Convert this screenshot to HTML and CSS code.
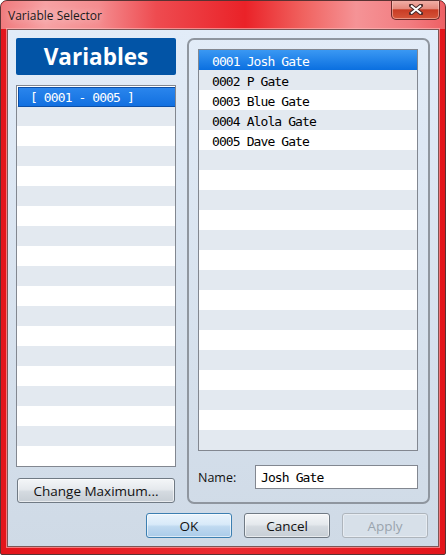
FILE: index.html
```html
<!DOCTYPE html>
<html lang="en">
<head>
  <meta charset="UTF-8" />
  <title>Variable Selector</title>
  <link rel="stylesheet" href="styles.css">
</head>
<body>
  <div class="window">
    <div class="titlebar">
      <span class="title">Variable Selector</span>
      <div class="close">
        <svg width="14" height="11" viewBox="0 0 14 11">
          <path d="M2 1.5 L12 9.5 M12 1.5 L2 9.5" stroke="#4a2a2a" stroke-width="4" stroke-linecap="square"/>
          <path d="M2 1.5 L12 9.5 M12 1.5 L2 9.5" stroke="#ffffff" stroke-width="2"/>
        </svg>
      </div>
    </div>
    <div class="client">
      <div class="main">
        <div class="left">
          <div class="header">Variables</div>
          <div class="list range-list">
            <div class="row selected">[ 0001 - 0005 ]</div>
          </div>
          <button class="btn btn-max">Change Maximum...</button>
        </div>
        <div class="group">
          <div class="list var-list">
            <div class="row selected">0001 Josh Gate</div>
            <div class="row">0002 P Gate</div>
            <div class="row">0003 Blue Gate</div>
            <div class="row">0004 Alola Gate</div>
            <div class="row">0005 Dave Gate</div>
          </div>
          <div class="name-row">
            <label for="name">Name:</label>
            <input type="text" id="name" value="Josh Gate" />
          </div>
        </div>
      </div>
      <div class="actions">
        <button class="btn btn-ok">OK</button>
        <button class="btn">Cancel</button>
        <button class="btn" disabled>Apply</button>
      </div>
    </div>
  </div>
</body>
</html>
```

FILE: styles.css
```css
body {
  margin: 0;
  background: #fff;
  font-family: "Open Sans", "Noto Sans", sans-serif;
}
.window {
  width: 446px;
  height: 555px;
  box-sizing: border-box;
  border: 1px solid #5a3232;
  border-radius: 7px 7px 2px 2px;
  background: linear-gradient(90deg, #e3151b, #ea2a30 50%, #e3151b);
  display: flex;
  flex-direction: column;
  overflow: hidden;
}
.titlebar {
  height: 28px;
  display: flex;
  align-items: center;
  padding-left: 7px;
  background: linear-gradient(90deg, #f07a7d 0%, #f6a2a4 10%, #f48c8f 22%, #ee4b50 35%, #ea2228 55%, #f0625f 68%, #f59396 80%, #f27c80 92%, #ee6064 100%);
}
.title {
  font-size: 12px;
  color: #1a1a1a;
  text-shadow: 0 0 8px rgba(255, 255, 255, 0.7);
}
.close {
  margin-left: auto;
  margin-right: 5px;
  align-self: flex-start;
  margin-top: -1px;
  width: 47px;
  height: 19px;
  border: 1px solid #6a2a2a;
  border-top: none;
  border-radius: 0 0 5px 5px;
  background: linear-gradient(#f2b2aa, #e58a7e 45%, #c93c24 52%, #d5553a 100%);
  box-shadow: inset 0 0 0 1px rgba(255, 210, 200, 0.5);
  display: flex;
  align-items: center;
  justify-content: center;
}
.client {
  flex: 1;
  margin: 0 6px 7px;
  border: 1px solid #7d5656;
  box-shadow: 0 0 0 1px rgba(255, 190, 190, 0.6);
  background: linear-gradient(#e2ecf8, #cfdae6);
  padding: 8px;
  display: flex;
  flex-direction: column;
}
.main {
  display: flex;
  gap: 11px;
  height: 466px;
}
.left {
  width: 160px;
  display: flex;
  flex-direction: column;
}
.header {
  height: 37px;
  background: #0254a6;
  border-radius: 2px;
  color: #fff;
  font-size: 22.5px;
  font-weight: bold;
  display: flex;
  align-items: center;
  justify-content: center;
}
.list {
  border: 1px solid #828790;
  background: repeating-linear-gradient(#fff 0 20px, #e3e9f0 20px 40px);
  font-family: "DejaVu Sans Mono", monospace;
  font-size: 13px;
  letter-spacing: -0.9px;
}
.range-list {
  margin-top: 10px;
  height: 380px;
}
.row {
  height: 20px;
  line-height: 24px;
  padding-left: 13px;
  color: #000;
}
.range-list .row {
  padding-left: 11px;
}
.range-list .selected {
  height: 18px;
  line-height: 20px;
  margin: 1px 0 1px 1px;
  border: 1px solid #0b4fa8;
  border-right: none;
  background: linear-gradient(#2a85ec, #1270e0);
  color: #fff;
}
.var-list {
  height: 400px;
}
.var-list .selected {
  background: linear-gradient(#3a98f3, #0a6fe0);
  color: #fff;
}
.group {
  width: 220px;
  border: 2px solid #8f969f;
  border-radius: 7px;
  padding: 9px 10px 13px 9px;
  display: flex;
  flex-direction: column;
}
.name-row {
  margin-top: 14px;
  display: flex;
  align-items: center;
}
.name-row label {
  width: 57px;
  font-size: 12.5px;
  color: #111;
}
.name-row input {
  flex: 1;
  min-width: 0;
  height: 22px;
  padding: 0 5px;
  border: 1px solid #828790;
  font-family: "DejaVu Sans Mono", monospace;
  font-size: 13px;
  letter-spacing: -0.9px;
  color: #000;
  outline: none;
}
.btn {
  height: 25px;
  border: 1px solid #707a84;
  border-radius: 3px;
  background: linear-gradient(#f4f6f8, #e5e9ed 45%, #d4dae0 55%, #c7ced5);
  box-shadow: inset 0 0 0 1px rgba(255, 255, 255, 0.6);
  font-family: "Open Sans", "Noto Sans", sans-serif;
  font-size: 13.5px;
  color: #111;
  padding: 0;
}
.btn-max {
  margin: 11px 0 0 1px;
  width: 158px;
}
.actions {
  margin-top: 9px;
  display: flex;
  justify-content: flex-end;
  gap: 12px;
  padding-right: 2px;
}
.actions .btn {
  width: 86px;
}
.btn-ok {
  border-color: #3c7fb1;
  background: linear-gradient(#eaf4fc, #d8eaf9 45%, #bfd9f0 55%, #aacbe9);
}
.btn:disabled {
  border-color: #aeb5bc;
  background: #d7e0e9;
  box-shadow: inset 0 0 0 1px rgba(255, 255, 255, 0.4);
  color: #9aa4ae;
}
```
